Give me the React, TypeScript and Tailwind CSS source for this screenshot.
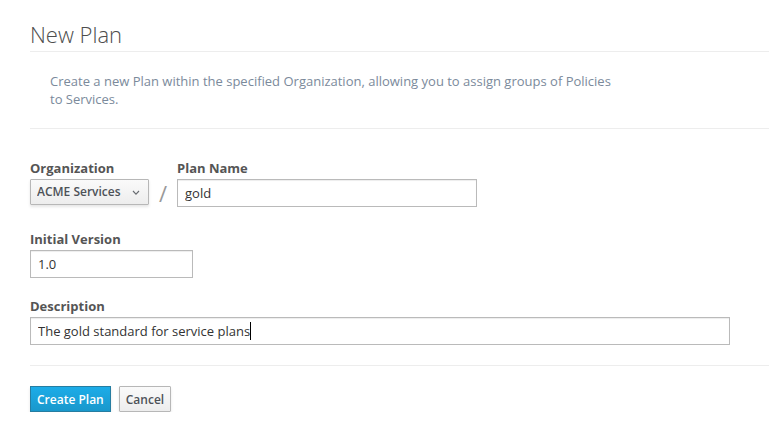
const field =
  "block h-7 max-w-full border border-[#bababa] bg-white px-[7px] text-[13px] text-[#333333] shadow-[inset_0_1px_1px_rgba(3,3,3,0.075)] outline-none";
const label = "block text-[13px] leading-5 font-bold text-[#555555]";
const button = "h-[26px] border px-1.5 pt-px text-[12px] font-semibold shadow-[0_2px_3px_rgba(3,3,3,0.1)]";

export default function App() {
  return (
    <main className="pt-5 pl-[30px] font-['Open_Sans',sans-serif] text-[13px]">
      <h1 className="border-b border-[#ededed] pb-[3px] text-[22px] leading-7 font-light text-[#4d4d4d]">New Plan</h1>
      <p className="max-w-[610px] px-5 pt-5 pb-5 leading-[18px] text-[#7b8a9b]">
        Create a new Plan within the specified Organization, allowing you to assign groups of Policies to Services.
      </p>
      <form className="border-t border-[#ededed] pt-[29px]" onSubmit={(e) => e.preventDefault()}>
        <div className="flex">
          <div>
            <label htmlFor="organization" className={label}>Organization</label>
            <div className="relative mt-px">
              <select
                id="organization"
                defaultValue="ACME Services"
                className="block h-[26px] w-[119px] appearance-none rounded-[1px] border border-[#b7b7b7] bg-linear-to-b from-[#fafafa] to-[#ededed] pl-1.5 text-[12px] font-semibold text-[#4d5258] shadow-[0_2px_3px_rgba(3,3,3,0.1)]"
              >
                <option>ACME Services</option>
              </select>
              <svg viewBox="0 0 8 6" className="pointer-events-none absolute top-[11px] right-[9px] h-1.5 w-2" fill="none" stroke="#686c71" strokeWidth="1.1" aria-hidden="true">
                <path d="M1 1l3 3.2L7 1" />
              </svg>
            </div>
          </div>
          <span className="w-7 pt-[22px] text-center text-[22px] leading-[26px] text-[#999999]">/</span>
          <div>
            <label htmlFor="name" className={label}>Plan Name</label>
            <input id="name" defaultValue="gold" className={`${field} mt-px w-[300px]`} />
          </div>
        </div>
        <div className="mt-[22px]">
          <label htmlFor="version" className={label}>Initial Version</label>
          <input id="version" defaultValue="1.0" className={`${field} mt-px w-[163px]`} />
        </div>
        <div className="mt-[18px]">
          <label htmlFor="description" className={label}>Description</label>
          <div className="relative mt-px">
            <input id="description" defaultValue="The gold standard for service plans" className={`${field} w-[700px]`} />
            <span className="absolute top-[5px] left-[220px] h-[18px] w-px bg-black" />
          </div>
        </div>
        <div className="mt-5 flex gap-2 border-t border-[#ededed] pt-5">
          <button type="submit" className={`${button} border-[#267da1] bg-linear-to-b from-[#1cace8] to-[#1998cc] text-white`}>Create Plan</button>
          <button type="button" className={`${button} rounded-[1px] border-[#b7b7b7] bg-linear-to-b from-[#fafafa] to-[#ededed] text-[#4d5258]`}>Cancel</button>
        </div>
      </form>
    </main>
  );
}
